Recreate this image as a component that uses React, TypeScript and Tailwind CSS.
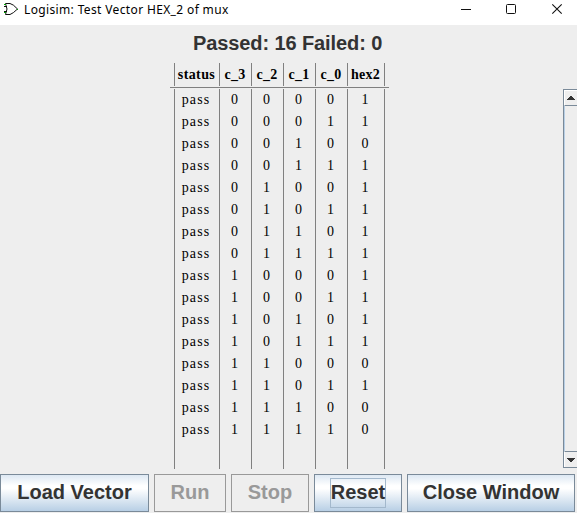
import React from "react";

const columns = ["status", "c_3", "c_2", "c_1", "c_0", "hex2"];
const results = "1101111111110100";
const rows = results.split("").map((hex, i) => [
  "pass",
  ...i.toString(2).padStart(4, "0").split(""),
  hex,
]);

const grid = "grid grid-cols-[45px_32px_32px_32px_32px_37px]";
const line = "border-r border-[#808080]";

function TitleBar() {
  return (
    <header className="flex h-[25px] items-start bg-white text-black">
      <svg className="ml-[3px] mt-[2px] shrink-0" width="16" height="14" viewBox="0 0 16 14" fill="none">
        <path d="M2.5 1.5H7Q10 2 14.5 7Q10 11.500 7 12.500H2.5Q5.500 7 2.500 1.500M1 4.500h3M1 9.500h3" stroke="#111" />
        <path d="M1 2.500h2M1 10.500h2M14 7.500h1" stroke="#00a000" />
      </svg>
      <h1 className="ml-[5px] whitespace-nowrap font-['Noto_Sans'] text-[12px] leading-[19px] tracking-[0.36px]">
        Logisim: Test Vector HEX_2 of mux
      </h1>
      <svg className="ml-auto mr-[4px] shrink-0" width="112" height="20" viewBox="0 0 112 20" fill="none" stroke="#111">
        <path d="M0 9.5h10" />
        <rect x="45.5" y="4.5" width="9" height="9" rx="1" />
        <path d="M91.3 4.3l9.4 9.4M100.7 4.3l-9.4 9.4" strokeWidth="1.1" />
      </svg>
    </header>
  );
}

function ResultTable() {
  return (
    <div className="flex h-[406px] w-[219px] flex-col font-['Liberation_Serif'] text-[14px] text-black">
      <div className="flex h-[25px] border-b border-[#808080] pl-[4px]">
        <div className={`${grid} h-[23px] border-l border-[#808080]`}>
          {columns.map((name, i) => (
            <div key={name} className={`${line} flex items-center justify-center pr-px font-bold ${i === 0 ? "tracking-[0.4px]" : "tracking-[0.3px]"}`}>
              {name}
            </div>
          ))}
        </div>
      </div>
      <div className={`${grid} ml-[4px] mt-[1px] h-[380px] w-[211px] border-l border-[#808080]`}>
        {columns.map((name, c) => (
          <div key={name} className={line}>
            {rows.map((row, r) => (
              <div key={r} className={`flex h-[22px] items-center justify-center pb-[2px] ${c === 0 ? "pr-[2px] tracking-[1.1px]" : "pr-[2px]"}`}>
                {row[c]}
              </div>
            ))}
          </div>
        ))}
      </div>
    </div>
  );
}

function ScrollBar() {
  return (
    <div className="mt-[26px] flex h-[379px] w-[14px] flex-col border-y border-l border-[#7a8a99] bg-[#eee]">
      <div className="flex h-[16px] items-center justify-center border-b border-l border-b-[#7a8a99] border-l-white shadow-[inset_0_1px_white]">
        <svg width="8" height="4" shapeRendering="crispEdges"><path d="M3 0h2v1h1v1h1v1h1v1H0V3h1V2h1V1h1z" fill="#333" /></svg>
      </div>
      <div className="flex-1 border-l border-[#b8cfe5]" />
      <div className="flex h-[16px] items-center justify-center border-l border-t border-l-white border-t-[#7a8a99]">
        <svg width="8" height="4" shapeRendering="crispEdges"><path d="M0 0h8v1H7v1H6v1H5v1H3V3H2V2H1V1H0z" fill="#333" /></svg>
      </div>
    </div>
  );
}

function Button({ label, width, disabled, focused }: { label: string; width: string; disabled?: boolean; focused?: boolean }) {
  const look = disabled
    ? "border-[#999] text-[#999]"
    : "border-[#7a8a99] text-[#333] bg-[linear-gradient(#dde8f3_0%,#fff_30%,#fff_38%,#b8cfe5_100%)]";
  return (
    <button disabled={disabled} className={`flex h-[38px] shrink-0 items-center justify-center border ${look} ${width}`}>
      <span className={`flex h-[30px] items-center whitespace-nowrap border pb-[2px] ${focused ? "border-[#a3b8cc]" : "border-transparent"}`}>
        {label}
      </span>
    </button>
  );
}

export default function App() {
  return (
    <div className="flex h-[513px] w-[577px] flex-col overflow-hidden bg-[#eee]">
      <TitleBar />
      <div className="h-[38px] pl-[193px] font-['Liberation_Sans'] text-[20px] font-bold leading-[36px] tracking-[-0.1px] text-[#333]">
        Passed: 16 Failed: 0
      </div>
      <main className="flex h-[411px] justify-between pl-[170px]">
        <ResultTable />
        <ScrollBar />
      </main>
      <footer className="flex gap-[5px] font-['Liberation_Sans'] text-[20px] font-bold">
        <Button label="Load Vector" width="w-[149px]" />
        <Button label="Run" width="w-[72px]" disabled />
        <Button label="Stop" width="w-[78px]" disabled />
        <Button label="Reset" width="w-[88px]" focused />
        <Button label="Close Window" width="w-[168px]" />
      </footer>
    </div>
  );
}
